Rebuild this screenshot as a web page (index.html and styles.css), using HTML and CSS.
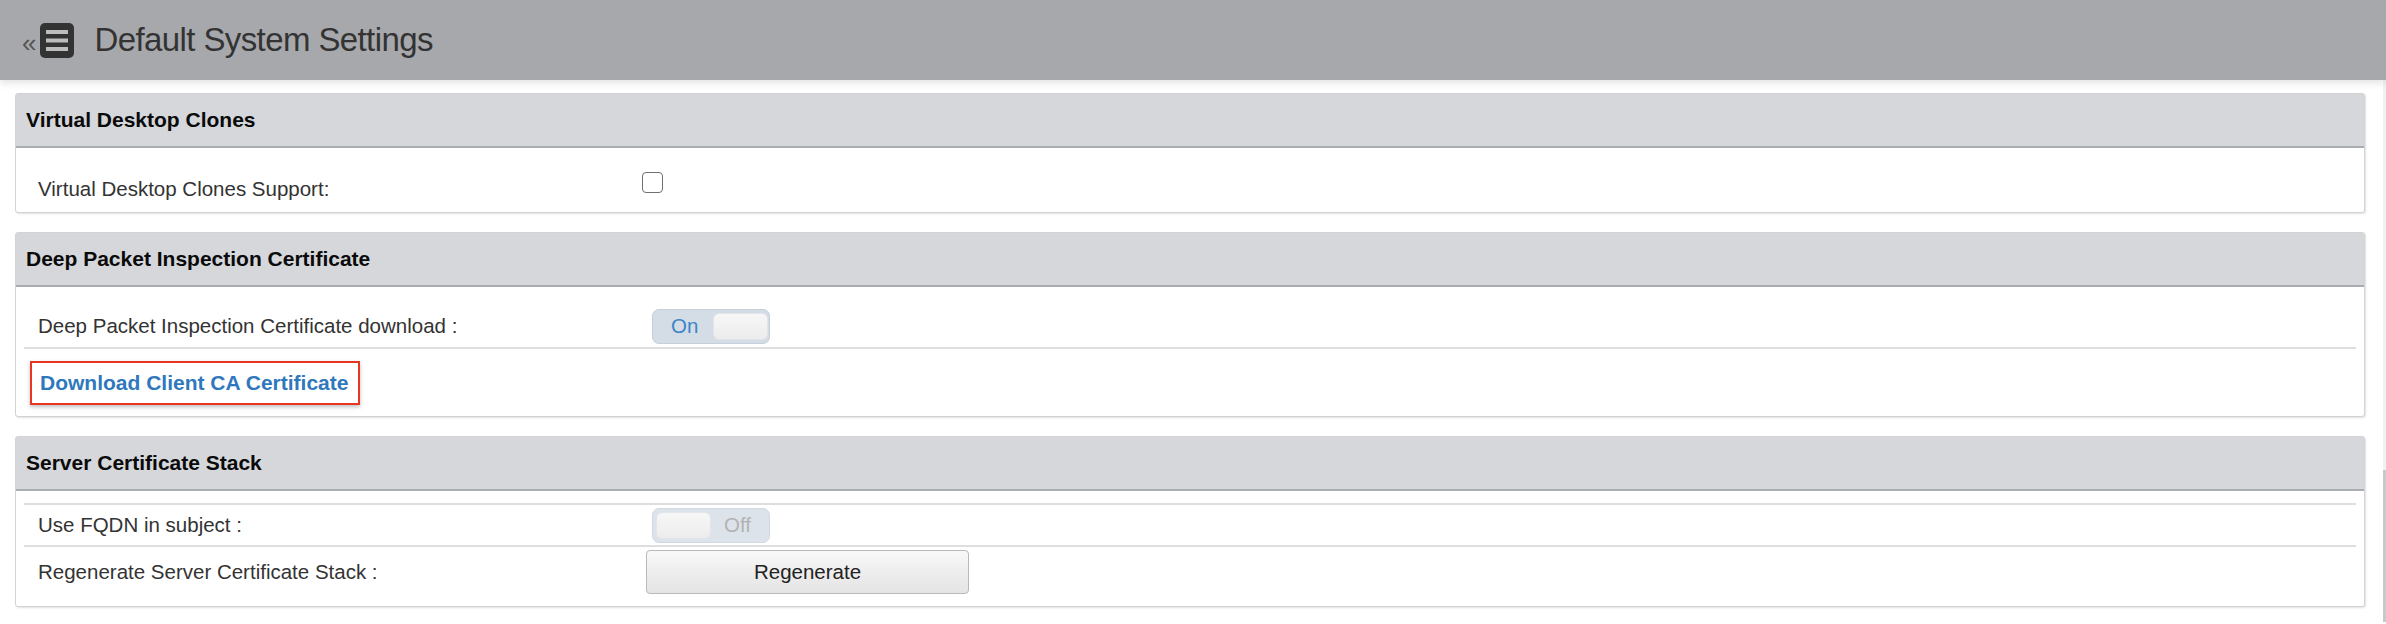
FILE: index.html
```html
<!DOCTYPE html>
<html lang="en">
<head>
  <meta charset="UTF-8" />
  <title>Default System Settings</title>
  <link rel="stylesheet" href="styles.css">
</head>
<body>
  <header class="topbar">
    <span class="collapse">«</span>
    <span class="menu-btn">
      <svg width="34" height="35" viewBox="0 0 34 35">
        <rect x="0" y="0" width="34" height="35" rx="5" fill="#333"/>
        <rect x="6" y="7" width="22" height="4" fill="#bdbdbd"/>
        <rect x="6" y="15.5" width="22" height="4" fill="#bdbdbd"/>
        <rect x="6" y="24" width="22" height="4" fill="#bdbdbd"/>
      </svg>
    </span>
    <h1>Default System Settings</h1>
  </header>

  <div class="page">
    <main class="content">

      <section class="panel">
        <h2 class="panel-title">Virtual Desktop Clones</h2>
        <div class="panel-body body-clones">
          <div class="row">
            <span class="row-label">Virtual Desktop Clones Support:</span>
            <input type="checkbox" class="check" />
          </div>
        </div>
      </section>

      <section class="panel">
        <h2 class="panel-title">Deep Packet Inspection Certificate</h2>
        <div class="panel-body body-dpi">
          <div class="row">
            <span class="row-label">Deep Packet Inspection Certificate download :</span>
            <span class="toggle on">
              <span class="toggle-text">On</span>
              <span class="knob"></span>
            </span>
          </div>
          <div class="link-row">
            <a href="#" class="download-link">Download Client CA Certificate</a>
          </div>
        </div>
      </section>

      <section class="panel">
        <h2 class="panel-title">Server Certificate Stack</h2>
        <div class="panel-body body-stack">
          <div class="row sep">
            <span class="row-label">Use FQDN in subject :</span>
            <span class="toggle off">
              <span class="knob"></span>
              <span class="toggle-text">Off</span>
            </span>
          </div>
          <div class="row sep row-button">
            <span class="row-label">Regenerate Server Certificate Stack :</span>
            <button type="button" class="regen">Regenerate</button>
          </div>
        </div>
      </section>

    </main>
    <div class="scrollbar"><div class="thumb"></div></div>
  </div>
</body>
</html>
```

FILE: styles.css
```css
body {
  margin: 0;
  font-family: "Liberation Sans", Arial, sans-serif;
  background: #fff;
  color: #333;
}

.topbar {
  height: 80px;
  background: #a7a8ac;
  display: flex;
  align-items: center;
  padding-left: 22px;
  box-shadow: 0 3px 7px rgba(110, 90, 90, 0.18);
  position: relative;
  z-index: 1;
}

.collapse {
  font-size: 26px;
  color: #555;
  margin-top: 6px;
}

.menu-btn {
  display: flex;
  margin-left: 4px;
  margin-top: 1px;
}

.topbar h1 {
  margin: 0 0 0 20px;
  font-weight: normal;
  font-size: 33px;
  letter-spacing: -0.6px;
  color: #333;
}

.page {
  display: flex;
}

.content {
  flex: 1;
  padding: 13px 18px 15px 15px;
  display: flex;
  flex-direction: column;
  gap: 19px;
}

.panel {
  background: #fff;
  border: 1px solid #d3d3d3;
  border-radius: 3px;
  box-shadow: 1px 1px 2px rgba(0, 0, 0, 0.12);
}

.panel-title {
  margin: 0;
  height: 52px;
  display: flex;
  align-items: center;
  padding-left: 10px;
  background: #d5d7db;
  border-bottom: 2px solid #a9acb1;
  font-size: 21px;
  font-weight: bold;
  color: #0a0a0a;
}

.panel-body {
  padding: 0 8px;
}

.body-clones {
  padding-top: 20px;
  padding-bottom: 2px;
}

.body-dpi {
  padding-top: 18px;
}

.body-stack {
  padding-top: 12px;
}

.row {
  display: flex;
  align-items: center;
  height: 42px;
  padding-left: 14px;
  font-size: 20.5px;
  color: #333;
}

.row.sep {
  height: 40px;
  border-top: 2px solid #dedede;
}

.row.row-button {
  height: 44px;
  padding-top: 3px;
  padding-bottom: 12px;
}

.row-label {
  width: 604px;
  flex-shrink: 0;
}

.check {
  appearance: none;
  width: 21px;
  height: 21px;
  margin: 4px 0 0 0;
  align-self: flex-start;
  border: 1.5px solid #6f6f6f;
  border-radius: 4px;
  background: #fff;
}

.toggle {
  width: 116px;
  height: 33px;
  margin-left: 10px;
  display: flex;
  align-items: center;
  background: #d4dce6;
  border: 1px solid #c6cfda;
  border-radius: 7px;
  box-sizing: content-box;
}

.toggle .knob {
  width: 55px;
  height: 27px;
  background: linear-gradient(#f7f7f7, #ececec);
  border: 1px solid #e2e5e9;
  border-radius: 6px;
  box-sizing: border-box;
}

.toggle.on .toggle-text {
  color: #3d86c6;
  margin-left: 18px;
  width: 42px;
}

.toggle.off {
  background: #dde3ea;
  border-color: #d3d9e1;
}

.toggle.off .knob {
  margin-left: 3px;
}

.toggle.off .toggle-text {
  color: #b3b3b3;
  margin-left: 13px;
}

.link-row {
  border-top: 2px solid #dedede;
  padding: 12px 0 11px 6px;
}

.download-link {
  display: inline-block;
  height: 40px;
  line-height: 40px;
  padding: 0 10px 0 8px;
  border: 2px solid #e8351f;
  box-shadow: 0 2px 4px rgba(0, 0, 0, 0.25);
  font-size: 21px;
  font-weight: bold;
  color: #2f78bd;
  text-decoration: none;
}

.regen {
  width: 323px;
  height: 44px;
  margin-left: 4px;
  font-family: "Liberation Sans", Arial, sans-serif;
  font-size: 20.5px;
  color: #222;
  background: linear-gradient(#f8f8f8, #e4e4e4);
  border: 1px solid #b7b9bc;
  border-radius: 4px;
}

.scrollbar {
  width: 3px;
  background: #f1f1f1;
  display: flex;
  align-items: flex-end;
}

.thumb {
  width: 3px;
  height: 152px;
  background: #c8c8cb;
}
```
